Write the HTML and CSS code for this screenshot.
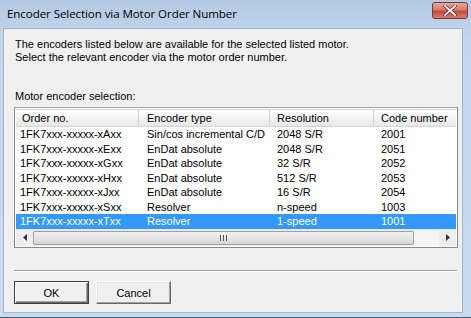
FILE: index.html
```html
<!DOCTYPE html>
<html lang="en">
<head>
    <meta charset="UTF-8">
    <title>Encoder Selection via Motor Order Number</title>
    <link rel="stylesheet" href="styles.css">
</head>
<body>
    <div class="window">
        <div class="titlebar">
            <span class="title">Encoder Selection via Motor Order Number</span>
            <span class="close">
                <svg width="14" height="11" viewBox="0 0 14 11">
                    <path d="M2 1 L12 10 M12 1 L2 10" stroke="#6b2b2b" stroke-width="3.4" stroke-linecap="square"/>
                    <path d="M2 1 L12 10 M12 1 L2 10" stroke="#fff" stroke-width="1.8" stroke-linecap="square"/>
                </svg>
            </span>
        </div>

        <div class="client">
            <p class="intro">The encoders listed below are available for the selected listed motor.<br>Select the relevant encoder via the motor order number.</p>
            <p class="caption">Motor encoder selection:</p>

            <div class="list">
                <div class="row head">
                    <span>Order no.</span>
                    <span>Encoder type</span>
                    <span>Resolution</span>
                    <span>Code number</span>
                </div>
                <div class="rows">
                    <div class="row"><span>1FK7xxx-xxxxx-xAxx</span><span>Sin/cos incremental C/D</span><span>2048 S/R</span><span>2001</span></div>
                    <div class="row"><span>1FK7xxx-xxxxx-xExx</span><span>EnDat absolute</span><span>2048 S/R</span><span>2051</span></div>
                    <div class="row"><span>1FK7xxx-xxxxx-xGxx</span><span>EnDat absolute</span><span>32 S/R</span><span>2052</span></div>
                    <div class="row"><span>1FK7xxx-xxxxx-xHxx</span><span>EnDat absolute</span><span>512 S/R</span><span>2053</span></div>
                    <div class="row"><span>1FK7xxx-xxxxx-xJxx</span><span>EnDat absolute</span><span>16 S/R</span><span>2054</span></div>
                    <div class="row"><span>1FK7xxx-xxxxx-xSxx</span><span>Resolver</span><span>n-speed</span><span>1003</span></div>
                    <div class="row selected"><span>1FK7xxx-xxxxx-xTxx</span><span>Resolver</span><span>1-speed</span><span>1001</span></div>
                </div>
                <div class="hscroll">
                    <span class="arrow">
                        <svg width="4" height="7" viewBox="0 0 4 7"><path d="M4 0 L0 3.5 L4 7 Z" fill="#333"/></svg>
                    </span>
                    <span class="thumb"><span class="grip"></span></span>
                    <span class="track"></span>
                    <span class="arrow">
                        <svg width="4" height="7" viewBox="0 0 4 7"><path d="M0 0 L4 3.5 L0 7 Z" fill="#333"/></svg>
                    </span>
                </div>
            </div>

            <div class="separator"></div>

            <div class="buttons">
                <button class="btn default">OK</button>
                <button class="btn">Cancel</button>
            </div>
        </div>
    </div>
</body>
</html>
```

FILE: styles.css
```css
body {
    margin: 0;
    padding: 0;
    font-family: "Liberation Sans", Arial, sans-serif;
    font-size: 11px;
    color: #000;
    background: #c4d7ec;
}

.window {
    width: 471px;
    height: 318px;
    box-sizing: border-box;
    display: flex;
    flex-direction: column;
    padding: 0 8px 4px 3px;
    background: linear-gradient(to bottom, #b3cae4 0px, #c3d6ec 40px, #c9dbee 100%);
    border-bottom: 1px solid #405a78;
    overflow: hidden;
}

.titlebar {
    height: 28px;
    display: flex;
    align-items: flex-start;
    position: relative;
}

.title {
    font-family: "Open Sans", "Noto Sans", sans-serif;
    font-size: 11.6px;
    color: #000;
    margin: 6px 0 0 4px;
    letter-spacing: -0.1px;
}

/* close button sits on the frame */
.close {
    position: absolute;
    left: 429px;
    top: 2px;
    width: 36px;
    height: 17px;
    box-sizing: border-box;
    border: 1px solid #7a3636;
    border-radius: 3px;
    background: linear-gradient(to bottom, #e8a89b 0%, #d77b6b 45%, #c24a38 55%, #d3806c 100%);
    display: flex;
    align-items: center;
    justify-content: center;
}

.client {
    flex: 1;
    background: #f0f0f0;
    border: 1px solid #a3b6cc;
    padding: 0 5px 0 10px;
    display: flex;
    flex-direction: column;
}

.intro {
    margin: 9px 0 0 1px;
    line-height: 13px;
}

.caption {
    margin: 26px 0 0 1px;
    line-height: 13px;
}

.list {
    margin-top: 4px;
    width: 444px;
    height: 141px;
    box-sizing: border-box;
    background: #fff;
    border: 1px solid #828790;
    border-top-color: #a0a0a0;
    padding: 1px;
    display: flex;
    flex-direction: column;
}

.row {
    display: grid;
    grid-template-columns: 123px 131px 104px 82px;
    height: 14.5px;
    line-height: 14.5px;
    white-space: nowrap;
}

.row span {
    padding-left: 4px;
    overflow: hidden;
}

.row span:nth-child(2) {
    padding-left: 8px;
}

.row span:nth-child(3),
.row span:nth-child(4) {
    padding-left: 7px;
}

.head {
    height: 16px;
    line-height: 16px;
    background: linear-gradient(to bottom, #ffffff 0%, #f3f3f3 50%, #e8e8e8 100%);
    border-top: 1px solid #d5d5d5;
    border-bottom: 1px solid #d5d5d5;
}

.head span {
    border-right: 1px solid #d5d5d5;
    padding-left: 6px;
}

.head span:nth-child(2) {
    padding-left: 8px;
}

.head span:nth-child(3),
.head span:nth-child(4) {
    padding-left: 7px;
}

.head span:last-child {
    border-right: none;
}

.rows {
    flex: 1;
    padding-top: 0;
}

.selected {
    background: #3399ff;
    color: #fff;
}

.hscroll {
    height: 17px;
    display: flex;
    background: #ededed;
    border-top: 1px solid #e6e6e6;
}

.arrow {
    width: 17px;
    display: flex;
    align-items: center;
    justify-content: center;
}

.thumb {
    width: 381px;
    box-sizing: border-box;
    margin: 1px 0;
    border: 1px solid #9f9f9f;
    border-radius: 2px;
    background: linear-gradient(to bottom, #f2f2f2 0%, #e6e6e6 50%, #d6d6d6 100%);
    display: flex;
    align-items: center;
    justify-content: center;
}

.grip {
    width: 7px;
    height: 6px;
    background: repeating-linear-gradient(to right, #555 0px, #555 1px, transparent 1px, transparent 3px);
}

.track {
    flex: 1;
    background: #f4f4f4;
}

.separator {
    margin-top: 22px;
    width: 443px;
    height: 1px;
    background: #a0a0a0;
    border-bottom: 1px solid #fff;
}

.buttons {
    display: flex;
    gap: 7px;
    margin-top: 9px;
}

.btn {
    width: 75px;
    height: 23px;
    font-family: "Liberation Sans", Arial, sans-serif;
    font-size: 11px;
    color: #000;
    background: #f0f0f0;
    border: 1px solid;
    border-color: #fff #696969 #696969 #fff;
    box-shadow: inset -1px -1px 0 #a0a0a0, inset 1px 1px 0 #e3e3e3;
    padding: 0;
}

.btn.default {
    border: 1px solid #404040;
    box-shadow: inset 1px 1px 0 #fff, inset -1px -1px 0 #696969, inset -2px -2px 0 #a0a0a0;
}
```
